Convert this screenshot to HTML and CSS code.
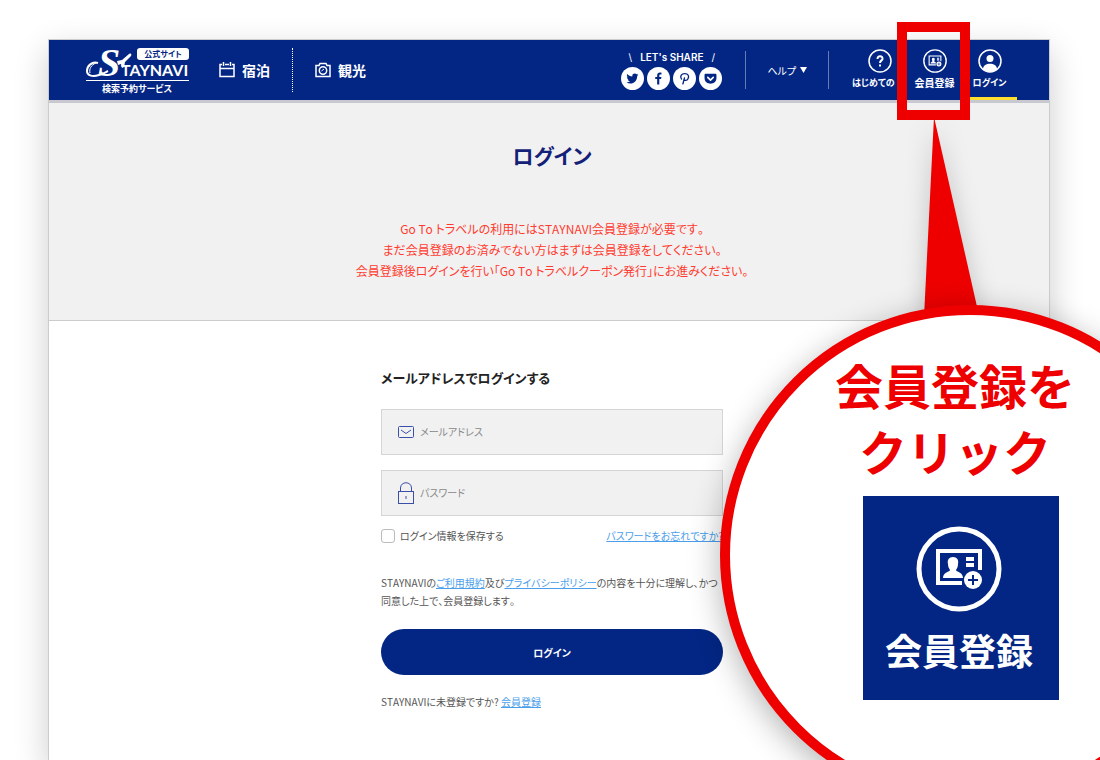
FILE: index.html
```
<!DOCTYPE html>
<html lang="ja">
<head>
  <meta charset="UTF-8">
  <meta name="viewport" content="width=device-width, initial-scale=1.0">
  <title>ログイン | STAYNAVI</title>
  <link rel="stylesheet" href="styles.css">
</head>
<body>
  <!-- shared icon: member card with plus -->
  <svg class="defs" width="0" height="0" aria-hidden="true">
    <symbol id="icon-register" viewBox="0 0 86 86">
      <circle cx="43" cy="43" r="40" fill="none" stroke="#fff" stroke-width="5"/>
      <path d="M46 57H22V25H64V44" fill="none" stroke="#fff" stroke-width="4"/>
      <path d="M37 31c4 0 6 3 5 7 0 3-1 4-2 6 0 2 7 2 7 8H27c0-6 7-6 7-8-1-2-2-3-2-6-1-4 1-7 5-7z" fill="#fff"/>
      <path d="M50 31h8v4h-8zM50 37h8v4h-8z" fill="#fff"/>
      <circle cx="57" cy="54" r="9" fill="#fff"/>
      <path d="M57 49v10M52 54h10" stroke="#032684" stroke-width="2"/>
    </symbol>
  </svg>

  <div class="stage">
    <div class="page">
      <header>
        <a class="logo" href="#" aria-label="STAYNAVI">
          <svg width="104" height="52" viewBox="0 0 104 52">
            <text class="logo-s" x="12" y="32">S</text>
            <path d="M12 19C6 17 1 22 1 27c0 5 6 6 12 4 4-1 7-3 9-4" fill="none" stroke="#fff" stroke-width="2"/>
            <path d="M10 19c-5 2-7 6-6 10" fill="none" stroke="#fff" stroke-width="1"/>
            <path d="M31 17l5-1 7-6c2-1 3 0 2 2l-6 6-1 5-2 1-1-4-3 1z" fill="#fff"/>
            <text class="logo-name" x="35" y="32">TAYNAVI</text>
            <rect x="51" y="4" width="52" height="12" rx="3" fill="#fff"/>
            <text class="logo-tag" x="77" y="13" text-anchor="middle">公式サイト</text>
            <path d="M0 36.500h103" stroke="#fff"/>
            <text class="logo-sub" x="51" y="48" text-anchor="middle">検索予約サービス</text>
          </svg>
        </a>

        <nav class="main-nav">
          <a href="#">
            <svg width="16" height="16" viewBox="0 0 16 16" fill="none" stroke="#fff" stroke-width="1.500">
              <path d="M3 2.500H1v12h14v-12h-2M6 2.500h4M1 6.500h14M4.500 0v4M11.500 0v4"/>
            </svg>
            宿泊
          </a>
          <a href="#">
            <svg width="16" height="16" viewBox="0 0 16 16" fill="none" stroke="#fff" stroke-width="1.500">
              <path d="M1 3.500h3l1-2h6l1 2h3v11H1z"/>
              <circle cx="8" cy="8.500" r="3.700"/>
              <path d="M6.500 9L9 7" stroke-width="1"/>
            </svg>
            観光
          </a>
        </nav>

        <div class="share">
          <p><span>\</span>LET's SHARE<span>/</span></p>
          <div class="share-icons">
            <a href="#" aria-label="Twitter">
              <svg width="13" height="13" viewBox="0 0 24 24"><path d="M23 5c-1 .4-1.700.6-2.600.7 1-.6 1.600-1.400 2-2.500-.9.500-1.900.9-2.900 1.100a4.600 4.600 0 0 0-7.800 4.200C7.900 8.300 4.500 6.500 2.200 3.700c-1.200 2-.6 4.700 1.400 6-.7 0-1.400-.2-2-.6 0 2.200 1.500 4.100 3.600 4.600-.7.200-1.400.2-2 .1.500 1.800 2.300 3.100 4.300 3.200A9.200 9.200 0 0 1 .7 19c10 6 20.200-.5 20-12 .9-.6 1.700-1.300 2.300-2z"/></svg>
            </a>
            <a href="#" aria-label="Facebook">
              <svg width="13" height="13" viewBox="0 0 24 24"><path d="M9.500 23V13H6V9h3.500V6.300C9.500 3 11.500 1 14.700 1c1.200 0 2.300.1 2.800.2v3.600h-2c-1.600 0-2 .8-2 2V9h3.900l-.6 4h-3.300v10z"/></svg>
            </a>
            <a href="#" aria-label="Pinterest">
              <svg width="13" height="13" viewBox="0 0 24 24"><path d="M9 22c1-3 2-7 3-11M6.500 13C3 8 6 3 12.500 3S21 8 18.500 12.500c-2 4-6.500 3.500-7.500 1" fill="none" stroke="#032684" stroke-width="2.500" stroke-linecap="round"/></svg>
            </a>
            <a href="#" aria-label="Pocket">
              <svg width="13" height="13" viewBox="0 0 24 24"><path d="M3 3h18c1 0 2 1 2 2v6c0 14-22 14-22 0V5c0-1 1-2 2-2z"/><path d="M7 10l5 5 5-5" fill="none" stroke="#fff" stroke-width="3" stroke-linecap="round" stroke-linejoin="round"/></svg>
            </a>
          </div>
        </div>

        <a class="help" href="#">ヘルプ
          <svg width="7" height="6" viewBox="0 0 7 6"><path d="M0 0h7L3.500 6z" fill="#fff"/></svg>
        </a>

        <nav class="user-nav">
          <a class="first-time" href="#">
            <svg width="24" height="24" viewBox="0 0 24 24" fill="none" stroke="#fff">
              <circle cx="12" cy="12" r="11" stroke-width="1.500"/>
              <path d="M9.500 10c0-4 5.500-3.500 5 0-.3 1.500-2.500 1.500-2.500 4M12 15.500v2" stroke-width="2"/>
            </svg>
            <span>はじめての</span>
          </a>
          <a href="#">
            <svg width="24" height="24"><use href="#icon-register"/></svg>
            <span>会員登録</span>
          </a>
          <a class="current" href="#">
            <svg width="24" height="24" viewBox="0 0 24 24">
              <circle cx="12" cy="12" r="11" fill="none" stroke="#fff" stroke-width="1.500"/>
              <circle cx="12" cy="9.500" r="3.500" fill="#fff"/>
              <path d="M5 20c0-7 14-7 14 0-4 4-10 4-14 0z" fill="#fff"/>
            </svg>
            <span>ログイン</span>
          </a>
        </nav>
      </header>

      <main>
        <section class="intro">
          <h1>ログイン</h1>
          <p>Go To トラベルの利用にはSTAYNAVI会員登録が必要です。<br>
            まだ会員登録のお済みでない方はまずは会員登録をしてください。<br>
            会員登録後ログインを行い「Go To トラベルクーポン発行」にお進みください。</p>
        </section>

        <section class="login">
          <form>
            <h2>メールアドレスでログインする</h2>
            <label class="field">
              <svg width="16" height="22" viewBox="0 0 16 22" fill="none" stroke="#3a50a8">
                <rect x=".5" y="5.500" width="15" height="11" rx="1"/>
                <path d="M3 9l5 3.500L13 9"/>
              </svg>
              <input type="email" placeholder="メールアドレス" aria-label="メールアドレス">
            </label>
            <label class="field">
              <svg width="16" height="22" viewBox="0 0 16 22" fill="none" stroke="#3a50a8">
                <rect x=".5" y="9.500" width="15" height="12"/>
                <path d="M2.500 9.500V6c0-7 11-7 11 0v3.500M8 14v3"/>
              </svg>
              <input type="password" placeholder="パスワード" aria-label="パスワード">
            </label>
            <div class="options">
              <label><input type="checkbox">ログイン情報を保存する</label>
              <a href="#">パスワードをお忘れですか?</a>
            </div>
            <p class="terms">STAYNAVIの<a href="#">ご利用規約</a>及び<a href="#">プライバシーポリシー</a>の内容を十分に理解し、かつ同意した上で、会員登録します。</p>
            <button type="submit">ログイン</button>
            <p class="signup">STAYNAVIに未登録ですか? <a href="#">会員登録</a></p>
          </form>
        </section>
      </main>
    </div>

    <!-- guide drawn over the page -->
    <div class="guide">
      <svg class="pointer" width="54" height="200" viewBox="0 0 54 200"><path d="M10 0L54 194V200H0z" fill="#ee0000"/></svg>
      <div class="frame"></div>
      <div class="callout">
        <p>会員登録を<br>クリック</p>
        <div class="callout-card">
          <svg width="86" height="86"><use href="#icon-register"/></svg>
          <span>会員登録</span>
        </div>
      </div>
    </div>
  </div>
</body>
</html>
```
FILE: styles.css
```
:root {
  --navy: #032684;
  --red: #ee0000;
  --link: #4a9eea;
  --grey: #f1f1f1;
}

* {
  box-sizing: border-box;
  margin: 0;
}

body,
input,
button {
  font-family: "Noto Sans CJK JP", sans-serif;
  font-feature-settings: "palt";
  font-kerning: none;
}

body {
  background: #fff;
  color: #555;
  font-size: 10px;
}

.defs {
  position: absolute;
}

svg {
  display: block;
  flex: none;
}

.stage {
  position: relative;
  display: flex;
  min-height: 100vh;
  padding: 39px 50px 0 48px;
  overflow: hidden;
}

.page {
  flex: 1;
  border: 1px solid #ccc;
  border-bottom: none;
  box-shadow: 0 12px 32px rgba(0, 0, 0, 0.2);
}

/* header */
header {
  display: flex;
  align-items: center;
  height: 63px;
  padding: 0 32px 0 37px;
  background: var(--navy);
  border-bottom: 3px solid #c8c9d0;
}

header a {
  color: #fff;
  text-decoration: none;
}

.logo svg {
  overflow: visible;
}

.logo text {
  fill: #fff;
  font-weight: bold;
}

.logo .logo-s {
  font: italic bold 40px "Liberation Serif", serif;
}

.logo .logo-name {
  font: bold 16px Lato, sans-serif;
  font-kerning: normal;
}

.logo .logo-tag {
  fill: var(--navy);
  font-size: 8px;
}

.logo .logo-sub {
  font-size: 9px;
}

.main-nav {
  display: flex;
  margin-left: 29px;
}

.main-nav a {
  display: flex;
  align-items: center;
  gap: 7px;
  height: 44px;
  font-size: 14px;
  font-weight: bold;
}

.main-nav a + a {
  margin-left: 22px;
  padding-left: 22px;
  border-left: 1px dotted #fff;
}

.share {
  margin-left: auto;
  padding-right: 23px;
}

.share p {
  display: flex;
  justify-content: center;
  gap: 8px;
  color: #fff;
  font: 600 10px/13px Inter, sans-serif;
}

.share p span {
  font-weight: normal;
}

.share-icons {
  display: flex;
  gap: 3px;
  margin-top: 3px;
}

.share-icons a {
  display: grid;
  place-items: center;
  width: 23px;
  height: 23px;
  border-radius: 50%;
  background: #fff;
  fill: var(--navy);
}

.help {
  display: flex;
  align-items: center;
  gap: 4px;
  height: 38px;
  padding: 0 21px;
  border: solid rgba(255, 255, 255, 0.4);
  border-width: 0 1px;
}

.user-nav {
  display: flex;
  align-self: stretch;
  margin-left: 23px;
}

.user-nav a {
  display: flex;
  flex-direction: column;
  align-items: center;
  gap: 2px;
  width: 55px;
  padding-top: 9px;
  font-weight: bold;
  line-height: 16px;
}

.user-nav .first-time,
.user-nav .current {
  font-size: 9px;
}

.user-nav .first-time span {
  align-self: flex-start;
}

.user-nav .current {
  border-bottom: 3px solid #ffe02e;
}

/* intro */
.intro {
  padding: 36px 0 39px 6px;
  background: var(--grey);
  border-bottom: 1px solid #ccc;
  text-align: center;
}

.intro h1 {
  color: #141f78;
  font-size: 21px;
  line-height: 32px;
}

.intro p {
  margin-top: 47px;
  color: #ff3b30;
  font-size: 12px;
  line-height: 21px;
}

/* login form */
.login {
  padding: 47px 0 40px 6px;
}

.login form {
  max-width: 342px;
  margin: 0 auto;
}

.login a {
  color: var(--link);
  text-decoration: underline;
}

.login h2 {
  margin-bottom: 21px;
  color: #222;
  font-size: 13px;
  line-height: 20px;
}

.field {
  display: flex;
  align-items: center;
  gap: 6px;
  height: 46px;
  margin-bottom: 15px;
  padding-left: 16px;
  background: var(--grey);
  border: 1px solid #d5d5d5;
}

.field input {
  flex: 1;
  min-width: 0;
  height: 100%;
  padding: 0 0 2px;
  border: none;
  outline: none;
  background: none;
  font-size: 10px;
}

.field input::placeholder {
  color: #888;
}

.options {
  display: flex;
  align-items: center;
  justify-content: space-between;
  margin-top: -5px;
  line-height: 20px;
}

.options label {
  display: flex;
  align-items: center;
  gap: 5px;
}

.options input {
  appearance: none;
  width: 14px;
  height: 14px;
  background: #fff;
  border: 1px solid #bbb;
  border-radius: 3px;
}

.terms {
  margin-top: 28px;
  line-height: 18px;
}

.login button {
  display: block;
  width: 100%;
  height: 46px;
  margin-top: 19px;
  border: none;
  border-radius: 23px;
  background: var(--navy);
  color: #fff;
  font-size: 10px;
  font-weight: bold;
  cursor: pointer;
}

.signup {
  margin-top: 18px;
  line-height: 18px;
}

/* guide overlay */
.guide {
  position: absolute;
  top: 0;
  right: 0;
}

.frame {
  position: absolute;
  top: 22px;
  right: 130px;
  width: 73px;
  height: 98px;
  border: 10px solid var(--red);
}

.pointer {
  position: absolute;
  top: 117px;
  right: 122px;
  filter: drop-shadow(0 4px 12px rgba(0, 0, 0, 0.2));
}

.callout {
  position: absolute;
  top: 305px;
  right: -120px;
  display: flex;
  flex-direction: column;
  align-items: center;
  width: 500px;
  height: 500px;
  padding: 36px 18px 0 0;
  border: 10px solid var(--red);
  border-radius: 50%;
  background: #fff;
  box-shadow: 0 8px 32px rgba(0, 0, 0, 0.3);
}

.callout p {
  padding-right: 12px;
  color: var(--red);
  font-size: 48px;
  font-weight: bold;
  font-feature-settings: normal;
  line-height: 66px;
  text-align: center;
}

.callout-card {
  display: flex;
  flex-direction: column;
  align-items: center;
  gap: 16px;
  width: 196px;
  margin-top: 13px;
  padding: 30px 4px 28px 0;
  background: var(--navy);
  color: #fff;
  font-size: 37px;
  font-weight: bold;
  line-height: 44px;
}
```
